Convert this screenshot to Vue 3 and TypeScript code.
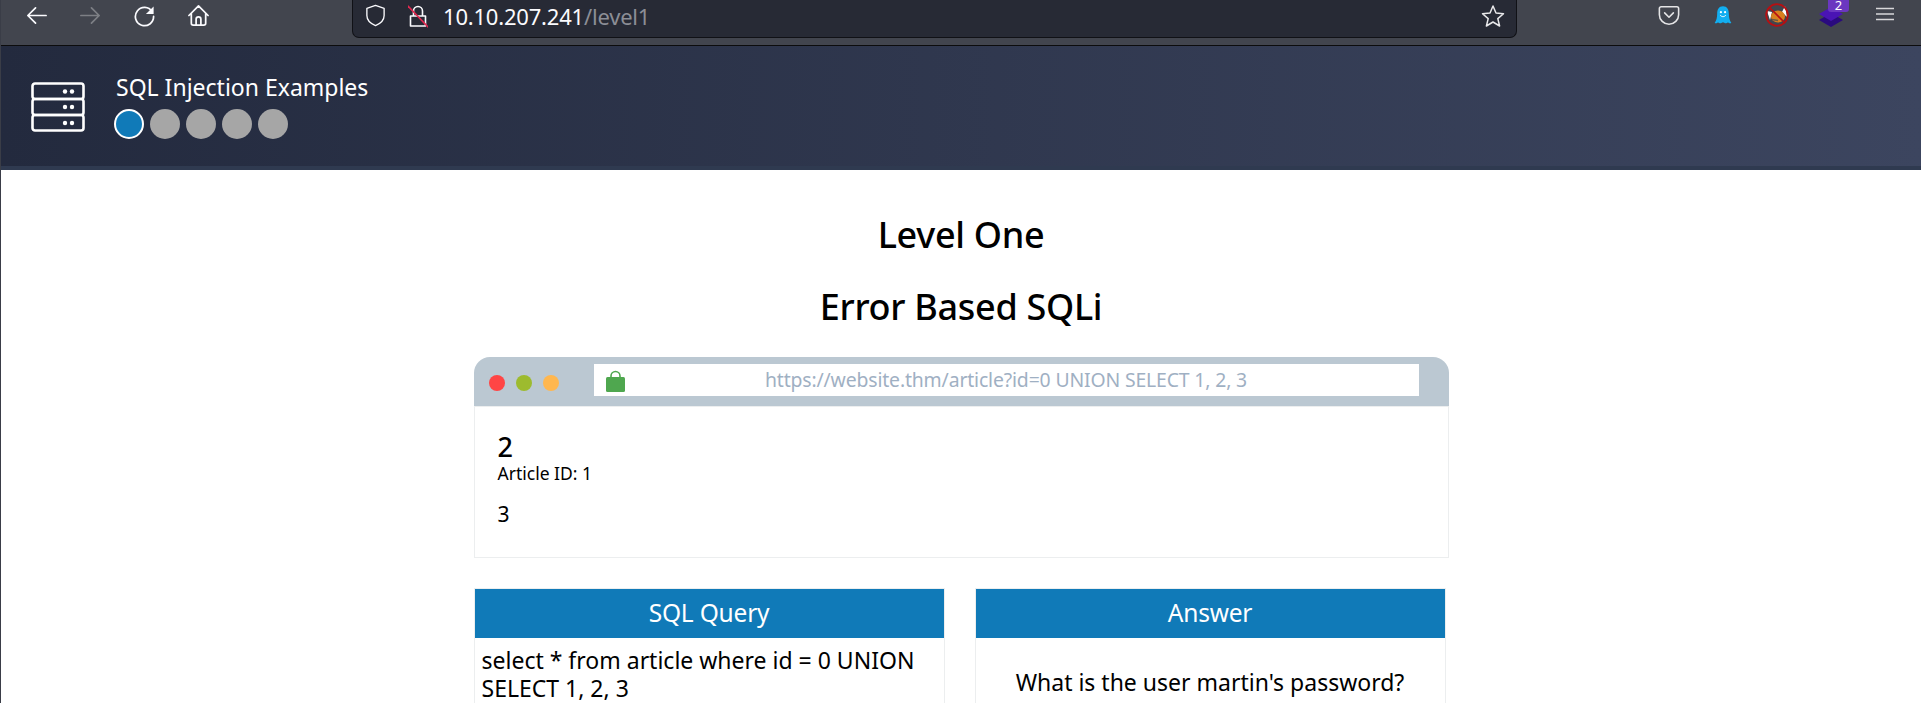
<template>
  <div class="page">
    <!-- browser toolbar -->
    <div class="toolbar">
      <div class="nav">
        <svg class="ico" viewBox="0 0 24 24"><path d="M22 12H3M11 4l-8 8 8 8" /></svg>
        <svg class="ico dim" viewBox="0 0 24 24"><path d="M2 12h19M13 4l8 8-8 8" /></svg>
        <svg class="ico" viewBox="0 0 24 24"><path d="M20 8a9.500 9.500 0 1 0 1.500 5" /><path class="fill" d="M21.500 2.500v8h-8z" /></svg>
        <svg class="ico" viewBox="0 0 24 24"><path d="M2 12 12 2l10 10M4.500 10v10a2 2 0 0 0 2 2h11a2 2 0 0 0 2-2V10M9.500 22v-6a2.500 2.500 0 0 1 5 0v6" /></svg>
      </div>
      <div class="urlbar">
        <svg class="ico shield" viewBox="0 0 24 24"><path d="M12 1.500 3 4.500V12c0 5 4 8.500 9 10.500 5-2 9-5.500 9-10.500V4.500z" /></svg>
        <svg class="ico lock" viewBox="0 0 20 24"><path d="M5.500 12V7a4.500 4.500 0 0 1 9 0v5M2.500 12h15v10h-15z" /><path class="slash" d="M0 2l20 21" /></svg>
        <span class="host">10.10.207.241<span class="path">/level1</span></span>
        <svg class="ico star" viewBox="0 0 24 24"><path d="m12 2 3 7 7.500.7-5.700 4.900 1.800 7.400L12 18l-6.600 4 1.800-7.400L1.500 9.700 9 9z" /></svg>
      </div>
      <div class="addons">
        <svg class="ico pocket" viewBox="0 0 24 24"><path d="M3 2h18a2 2 0 0 1 2 2v7a11 11 0 0 1-22 0V4a2 2 0 0 1 2-2zM7 9l5 5 5-5" /></svg>
        <svg class="ghost" viewBox="0 0 24 24">
          <path fill="#12aef0" d="M12 1c-5 0-7 4-7 9 0 5-1 8-3 11 2 1 3 0 4-1 1 1 3 2 4 1l2-1 2 1c1 1 3 0 4-1 1 1 2 2 4 1-2-3-3-6-3-11 0-5-2-9-7-9z" />
          <circle cx="9.500" cy="8" r="1.300" fill="#fff" /><circle cx="14.500" cy="8" r="1.300" fill="#fff" />
          <path d="M8.500 11.500c2 2.500 5 2.500 7 0" fill="none" stroke="#fff" stroke-width="1.200" />
        </svg>
        <svg class="fox" viewBox="0 0 24 24">
          <path fill="#fff" d="M2 8l5 1-2 8zM20 3l-3 6 5 5z" />
          <ellipse cx="13" cy="13.500" rx="7" ry="6" fill="#d9801f" />
          <path d="M7 16.500l6 1" stroke="#6b5a45" stroke-width="1.500" />
          <circle cx="12" cy="12" r="10.800" fill="none" stroke="#b70f12" stroke-width="1.800" />
          <path d="M4.500 4.500l15 15" stroke="#b70f12" stroke-width="1.600" />
        </svg>
        <div class="stack">
          <svg viewBox="0 0 24 20"><path fill="#2a0a7e" d="M12 6 24 13l-12 7-12-7z" /><path fill="#4a14b4" d="M12 0l12 7-12 7L0 7z" /></svg>
          <span class="badge">2</span>
        </div>
        <svg class="ico menu" viewBox="0 0 18 14"><path d="M0 1.500h18M0 7h18M0 12.500h18" /></svg>
      </div>
    </div>

    <!-- site header -->
    <header class="site-head">
      <svg class="logo" viewBox="0 0 54 50">
        <rect x="1.500" y="1.500" width="51" height="15.500" rx="2.500" />
        <rect x="1.500" y="17" width="51" height="16" rx="2.500" />
        <rect x="1.500" y="33" width="51" height="15.500" rx="2.500" />
        <g class="dots">
          <circle cx="34" cy="9.500" r="2.200" /><circle cx="41" cy="9.500" r="2.200" />
          <circle cx="34" cy="25" r="2.200" /><circle cx="41" cy="25" r="2.200" />
          <circle cx="34" cy="41" r="2.200" /><circle cx="41" cy="41" r="2.200" />
        </g>
      </svg>
      <div class="head-text">
        <div class="head-title">SQL Injection Examples</div>
        <div class="steps">
          <span v-for="n in 5" :key="n" class="step" :class="{ active: n === 1 }"></span>
        </div>
      </div>
    </header>

    <main class="content">
      <h2>Level One</h2>
      <h2 class="sub">Error Based SQLi</h2>

      <div class="mock">
        <div class="mock-bar">
          <i class="light red"></i><i class="light green"></i><i class="light amber"></i>
          <div class="mock-url">
            <svg class="padlock" viewBox="0 0 19 22">
              <path d="M5 9V6a4.500 4.500 0 0 1 9 0v3" fill="none" stroke="#4fa74f" stroke-width="1.600" />
              <rect x="0" y="7" width="19" height="15" rx="1.500" fill="#4fa74f" />
            </svg>
            <span>{{ mockUrl }}</span>
          </div>
        </div>
        <div class="mock-body">
          <div class="art-title">2</div>
          <div class="art-meta">Article ID: 1</div>
          <div class="art-text">3</div>
        </div>
      </div>

      <div class="panels">
        <section class="panel">
          <div class="panel-head">SQL Query</div>
          <div class="panel-body">{{ query }}</div>
        </section>
        <section class="panel">
          <div class="panel-head">Answer</div>
          <div class="panel-body answer">What is the user martin's password?</div>
        </section>
      </div>
    </main>
  </div>
</template>

<script setup lang="ts">
const mockUrl = 'https://website.thm/article?id=0 UNION SELECT 1, 2, 3'
const query = 'select * from article where id = 0 UNION SELECT 1, 2, 3'
</script>

<style>
html,
body {
  margin: 0;
  height: 100%;
  overflow: hidden;
  background: #fff;
}
</style>

<style scoped>
.page {
  height: 703px;
  overflow: hidden;
  border-left: 1px solid #3a3d47;
  box-sizing: border-box;
  font-family: "Noto Sans", "Open Sans", sans-serif;
  color: #000;
}

/* toolbar */
.toolbar {
  height: 46px;
  box-sizing: border-box;
  background: #42454e;
  border-bottom: 1px solid #0c0c0d;
  display: flex;
  align-items: flex-start;
}

.ico {
  fill: none;
  stroke: #fbfbfe;
  stroke-width: 1.8;
  stroke-linecap: round;
  stroke-linejoin: round;
}

.ico .fill {
  fill: #fbfbfe;
  stroke: none;
}

.nav {
  display: flex;
  align-items: center;
  gap: 31px;
  padding: 4px 0 0 24px;
  width: 350px;
  box-sizing: border-box;
}

.nav .ico {
  width: 23px;
  height: 23px;
}

.nav .dim {
  stroke: #7d7f85;
}

.urlbar {
  width: 1165px;
  height: 38px;
  box-sizing: border-box;
  background: #272a35;
  border: 1px solid #101116;
  border-top: none;
  border-radius: 0 0 7px 7px;
  display: flex;
  align-items: center;
  padding: 0 11px 6px 11px;
  margin-left: 1px;
}

.shield {
  width: 23px;
  height: 25px;
  stroke-width: 1.4;
}

.lock {
  width: 20px;
  height: 24px;
  margin-left: 21px;
  stroke-width: 1.6;
}

.lock .slash {
  stroke: #e22850;
}

.host {
  margin-left: 15px;
  font-size: 22px;
  line-height: 30px;
  color: #fbfbfe;
  flex: 1;
  letter-spacing: -0.2px;
}

.path {
  color: #8c8e96;
}

.star {
  width: 24px;
  height: 24px;
  stroke: #e8e8ea;
  stroke-width: 1.5;
}

.addons {
  flex: 1;
  height: 45px;
  position: relative;
}

.addons > * {
  position: absolute;
}

.pocket {
  left: 141px;
  top: 5px;
  width: 22px;
  height: 21px;
  stroke: #e4e4e6;
}

.ghost {
  left: 196px;
  top: 4px;
  width: 20px;
  height: 23px;
}

.fox {
  left: 248px;
  top: 3px;
  width: 24px;
  height: 24px;
}

.stack {
  left: 302px;
  top: 0;
  width: 38px;
  height: 28px;
}

.stack svg {
  position: absolute;
  left: 0;
  top: 7px;
  width: 24px;
  height: 20px;
}

.badge {
  position: absolute;
  left: 9px;
  top: 0;
  width: 21px;
  height: 12px;
  background: #6b37c0;
  border-radius: 0 0 3px 3px;
  color: #fff;
  font-size: 13px;
  line-height: 10px;
  text-align: center;
}

.menu {
  left: 359px;
  top: 7px;
  width: 18px;
  height: 14px;
  stroke: #d8d8da;
  stroke-width: 1.5;
  stroke-linecap: butt;
}

/* site header */
.site-head {
  height: 124px;
  box-sizing: border-box;
  border-bottom: 4px solid #2f3a50;
  background: linear-gradient(90deg, #232a3e 0%, #3c455f 100%);
  display: flex;
  align-items: flex-start;
  padding: 30px 0 0 30px;
}

.logo {
  width: 54px;
  height: 50px;
  margin-top: 6px;
  fill: none;
  stroke: #fff;
  stroke-width: 2.6;
}

.logo .dots {
  fill: #fff;
  stroke: none;
}

.head-text {
  margin-left: 29px;
  margin-top: -3px;
}

.head-title {
  font-size: 23px;
  line-height: 29px;
  color: #fff;
  padding-left: 2px;
}

.steps {
  display: flex;
  gap: 6px;
  margin-top: 7px;
}

.step {
  width: 30px;
  height: 30px;
  border-radius: 50%;
  background: #a6a6a6;
  box-sizing: border-box;
}

.step.active {
  background: #107ab8;
  border: 2px solid #fff;
}

/* page content */
.content {
  width: 975px;
  margin: 0 auto;
  padding-top: 43px;
}

h2 {
  margin: 0;
  font-size: 36px;
  line-height: 44px;
  font-weight: 500;
  text-align: center;
  letter-spacing: -0.3px;
}

h2.sub {
  margin-top: 28px;
}

.mock {
  margin-top: 28px;
}

.mock-bar {
  height: 49px;
  background: #bbc8d2;
  border-radius: 16px 16px 0 0;
  display: flex;
  align-items: flex-start;
  box-sizing: border-box;
  padding: 7px 0 0 15px;
}

.light {
  width: 16px;
  height: 16px;
  border-radius: 50%;
  margin-right: 11px;
  margin-top: 11px;
}

.red { background: #ff4545; }
.green { background: #9dbb2e; }
.amber { background: #ffb74f; }

.mock-url {
  width: 825px;
  height: 32px;
  margin-left: 24px;
  background: #fff;
  position: relative;
  text-align: center;
  font-size: 19.400px;
  line-height: 32px;
  color: #9fb0c3;
  letter-spacing: -0.15px;
}

.padlock {
  position: absolute;
  left: 12px;
  top: 6px;
  width: 19px;
  height: 22px;
}

.mock-body {
  height: 152px;
  box-sizing: border-box;
  border: 1px solid #eceeef;
  padding: 24px 23px 0;
}

.art-title {
  font-size: 27px;
  line-height: 31px;
  font-weight: 500;
}

.art-meta {
  font-size: 17.500px;
  line-height: 23px;
}

.art-text {
  font-size: 21px;
  line-height: 28px;
  margin-top: 15px;
}

.panels {
  display: grid;
  grid-template-columns: 471px 471px;
  justify-content: space-between;
  padding-right: 3px;
  margin-top: 30px;
}

.panel {
  border: 1px solid #eceeef;
  border-bottom: none;
  height: 160px;
}

.panel-head {
  height: 49px;
  background: #107ab8;
  color: #fff;
  font-size: 24.500px;
  line-height: 47px;
  text-align: center;
  letter-spacing: -0.2px;
}

.panel-body {
  padding: 8px 7px;
  font-size: 23px;
  line-height: 28px;
}

.panel-body.answer {
  padding-top: 30px;
  text-align: center;
}
</style>
